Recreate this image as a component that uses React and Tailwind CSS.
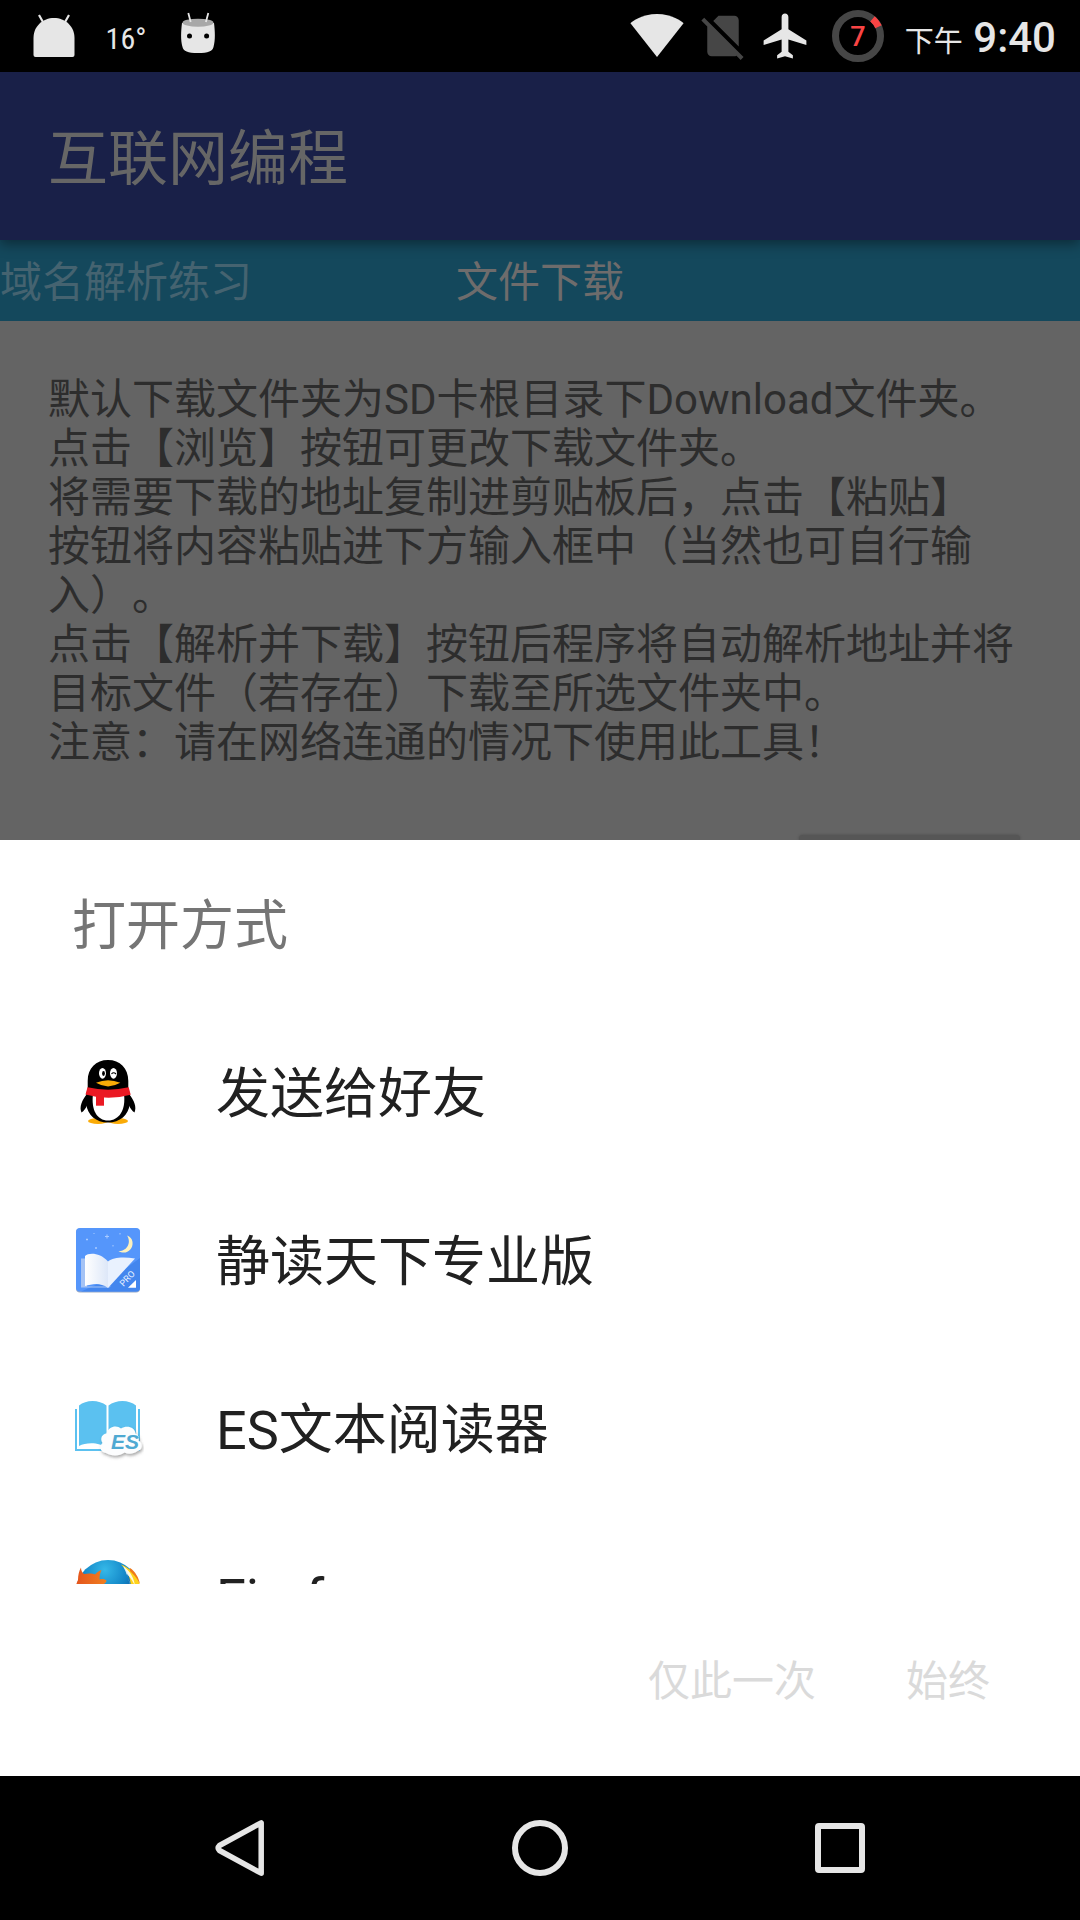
import React from "react";

function DroidIcon() {
  return (
    <svg viewBox="0 0 72 72" className="size-[72px]" aria-hidden="true">
      <path d="M21 15l4.500 8M51 15l-4.500 8" stroke="#e6e6e6" strokeWidth="2.200" />
      <path d="M15.500 38C15.500 26 25 18 36 18s20.500 8 20.500 20v17q0 2-2 2h-37q-2 0-2-2z" fill="#e6e6e6" />
    </svg>
  );
}

function CyanIcon() {
  return (
    <svg viewBox="0 0 72 72" className="size-[72px]" aria-hidden="true">
      <path d="M20 23C19 31 18.500 40 20.500 47c1 4 5 6 15.500 6s14.500-2 15.500-6c2-7 1.500-16 .5-24z" fill="#e6e6e6" />
      <ellipse cx="36" cy="22.700" rx="15.500" ry="4" fill="#a8a8a8" />
      <path d="M26.300 13l2.400 9M46.300 13l-2.400 9" stroke="#e6e6e6" strokeWidth="1.800" />
      <circle cx="27.500" cy="36" r="2.500" />
      <circle cx="44.600" cy="36" r="2.500" />
    </svg>
  );
}

function WifiIcon() {
  return (
    <svg viewBox="0 0 24 24" className="size-[54px]" fill="#e6e6e6" aria-hidden="true">
      <path d="M12 21.300L23.800 6.300C23 5.500 18.700 2.200 12 2.200S1 5.500.2 6.300z" />
    </svg>
  );
}

function NoSimIcon() {
  return (
    <svg viewBox="0 0 24 24" className="ml-3 size-[54px]" fill="#464646" aria-hidden="true">
      <path d="M18.990 5c0-1.100-.89-2-1.990-2h-7L7.660 5.340 19 16.680 18.990 5zM3.650 3.880L2.380 5.150 5 7.770V19c0 1.100.9 2 2 2h10.010c.35 0 .67-.1.96-.26l1.880 1.880 1.270-1.270L3.650 3.880z" />
    </svg>
  );
}

function PlaneIcon() {
  return (
    <svg viewBox="0 0 24 24" className="ml-2 size-[54px]" fill="#e6e6e6" aria-hidden="true">
      <path d="M21.500 16v-2L13.500 9V3.500c0-.83-.67-1.500-1.500-1.500s-1.500.67-1.500 1.500V9l-8 5v2l8-2.500V19l-2 1.500V22l3.500-1 3.500 1v-1.500L13.500 19v-5.500l8 2.500z" />
    </svg>
  );
}

function BatteryRing() {
  return (
    <div className="ml-5 grid size-[52px] place-items-center">
      <svg viewBox="0 0 52 52" className="col-start-1 row-start-1 size-[52px]" fill="none" strokeWidth="7" aria-hidden="true">
        <circle cx="26" cy="26" r="22.500" stroke="#464646" />
        <path d="M40.500 8.800A22.500 22.500 0 0 1 46.500 16.800" stroke="#f94444" />
      </svg>
      <span className="col-start-1 row-start-1 pt-0.5 text-[27px] leading-none font-medium text-[#f94444]">7</span>
    </div>
  );
}

function StatusBar() {
  return (
    <header className="flex h-[72px] shrink-0 items-center bg-black pr-6 pl-[18px] text-[#e6e6e6]">
      <DroidIcon />
      <span className="w-[72px] pt-1 text-center font-['Liberation_Sans_Narrow','Roboto_Condensed',Roboto,sans-serif] text-[30px]">16°</span>
      <CyanIcon />
      <div className="ml-auto flex items-center">
        <WifiIcon />
        <NoSimIcon />
        <PlaneIcon />
        <BatteryRing />
        <div className="ml-[21px] pt-2 text-[42px] leading-[48px] font-medium whitespace-nowrap">
          <span className="text-[29px] font-normal">下午</span> 9:40
        </div>
      </div>
    </header>
  );
}

function PenguinIcon() {
  return (
    <svg viewBox="0 0 72 72" className="size-[72px]" aria-hidden="true">
      <ellipse cx="26" cy="65" rx="10" ry="3" fill="#faab07" />
      <ellipse cx="46" cy="65" rx="10" ry="3" fill="#faab07" />
      <path d="M15 38c-5 6-8 13-5.500 18.500 2.500-1.500 4-4 5.500-7zM57 38c5 6 8 13 5.500 18.500-2.500-1.500-4-4-5.500-7z" />
      <path d="M36 4C24 4 15.700 12 15.700 25v8c-2 5-2 10-1.500 15C15.500 59 24 66.500 36 66.500S56.500 59 57.800 48c.5-5 .5-10-1.500-15v-8C56.300 12 48 4 36 4z" />
      <path d="M21 38c-2 16 4 26.500 15 26.500S54 54 52 38z" fill="#fff" />
      <ellipse cx="30.500" cy="17.300" rx="3.500" ry="5.400" fill="#fff" />
      <ellipse cx="41.500" cy="17.300" rx="3.500" ry="5.400" fill="#fff" />
      <ellipse cx="31.500" cy="17.500" rx="1.400" ry="2.400" />
      <path d="M39.500 18q2-2.500 4.500 0" fill="none" stroke="#000" strokeWidth="1.200" />
      <path d="M24 26.800Q36 21.500 48.300 26.800 36 34 24 26.800z" fill="#faab07" />
      <path d="M15.500 31.300Q36 36 56.700 31.300l2 7.500Q36 45 13.500 38.500z" fill="#eb1923" />
      <path d="M24 38h8v11.700h-8z" fill="#eb1923" />
    </svg>
  );
}

function MoonReaderIcon() {
  return (
    <svg viewBox="0 0 72 72" className="size-[72px]" aria-hidden="true">
      <defs>
        <linearGradient id="page" x1="0" x2="1">
          <stop offset="0" stopColor="#fff" />
          <stop offset="1" stopColor="#dde7f8" />
        </linearGradient>
      </defs>
      <rect x="4" y="4.500" width="64" height="64" rx="4" fill="#9aa9c4" />
      <rect x="4" y="4" width="64" height="63.500" rx="4" fill="#5596fb" />
      <path d="M68 34v29.500a4 4 0 0 1-4 4H9l34-15z" fill="#4386ee" />
      <path d="M9 34.500h6v28h24l-2 1H9z" fill="#a5c3f5" />
      <path d="M13 32c4-3.500 15-3.500 23 5.500V64c-8-6-16-4-23-2z" fill="url(#page)" />
      <path d="M36 37.500c5-4.500 16-5 27-3L36 64z" fill="#e9f1fe" />
      <path d="M55 11.500c5 7.500-.5 16-8.500 15.500 7 4.500 15-1 14-9-.3-3-2.500-5.500-5.500-6.500z" fill="#fdf1bd" />
      <path d="M35 10.500v4M33 12.500h4M15 14.500v2M14 15.500h2M24 23v2M23 24h2M48 9v1.500M41 21v1.500M22 9v1" stroke="#a9cbff" strokeWidth="1" />
      <path d="M64 56v7.700h-8z" fill="#fff" />
      <text x="0" y="0" transform="translate(51.500 63) rotate(-47)" fontSize="9" fill="#e6f0ff" fontFamily="Roboto, sans-serif">PRO</text>
    </svg>
  );
}

function EsReaderIcon() {
  return (
    <svg viewBox="0 0 72 72" className="size-[72px]" aria-hidden="true">
      <defs>
        <filter id="cloud" x="-20%" y="-20%" width="150%" height="160%">
          <feDropShadow dx="1" dy="2" stdDeviation="1.500" floodColor="#555" floodOpacity=".5" />
        </filter>
      </defs>
      <path d="M3 17h2v40h28.500l2 1.500 2-1.500H66V17h2v42H3z" fill="#5bc1f0" />
      <path d="M7 13.500C14 7.500 27 7.500 34.500 13.500V56C28 50 14 50 7 54zM36.500 13.500C44 7.500 57 7.500 64 13.500V52H36.500z" fill="#5bc1f0" />
      <path d="M34 61c-6-1-7-7-3.500-10-3-5 0-9 4-9.500 2-7 10-9 14.500-5 6-4 14-1 14.500 5 3.500 2 4 5 3 7 5 3 4 10-1 10.500-4 3-9 3.500-13 1.500-5 4-14 3.500-18.500.5z" fill="#fcfdfe" filter="url(#cloud)" />
      <text x="39" y="57" fontSize="21" fontStyle="italic" fontWeight="700" fill="#4fa9d2" fontFamily="Liberation Sans Narrow, Liberation Sans, sans-serif">ES</text>
    </svg>
  );
}

function FirefoxIcon() {
  return (
    <svg viewBox="0 0 72 72" className="size-[72px]" aria-hidden="true">
      <defs>
        <radialGradient id="globe" cx=".45" cy=".15" r=".7">
          <stop offset="0" stopColor="#35b8e8" />
          <stop offset=".5" stopColor="#1285c6" />
          <stop offset="1" stopColor="#0c3c85" />
        </radialGradient>
        <linearGradient id="fox" x1="0" x2="1">
          <stop offset="0" stopColor="#e4531c" />
          <stop offset="1" stopColor="#f8a022" />
        </linearGradient>
      </defs>
      <circle cx="36" cy="32" r="32" fill="url(#globe)" />
      <path d="M49 4.500C58 8 68 17 68 28c2 22-14 38-32 38 14-5 24-18 23-34C59 19 57 12 49 4.500z" fill="#ffd31a" />
      <path d="M51 6c6 4 11 11 12 20-2-5-6-10-9-13 2 4 4 9 4 13-1-8-4-14-7-20z" fill="#fff" fillOpacity=".85" />
      <path d="M58 8c5 3 9 10 10 16-3-6-6-9-10-13z" fill="#ee7a1c" />
      <path d="M3 36c0-8 1-12 3-16 0-5 1-9 3-12.500 0 3 1 5 3 6.500 5-1 9-.5 11 .5 2-2 4-4 6.500-4.500-1.500 3-2 6-2 9.500 3-1 6 0 7 1 0 3-4 4-7 6-2 14 14 22 31 15C44 76 3 68 3 36z" fill="url(#fox)" />
    </svg>
  );
}

const description = [
  "默认下载文件夹为SD卡根目录下Download文件夹。",
  "点击【浏览】按钮可更改下载文件夹。",
  "将需要下载的地址复制进剪贴板后，点击【粘贴】",
  "按钮将内容粘贴进下方输入框中（当然也可自行输入）。",
  "点击【解析并下载】按钮后程序将自动解析地址并将目标文件（若存在）下载至所选文件夹中。",
  "注意：请在网络连通的情况下使用此工具！",
];

const targets = [
  { name: "发送给好友", Icon: PenguinIcon },
  { name: "静读天下专业版", Icon: MoonReaderIcon },
  { name: "ES文本阅读器", Icon: EsReaderIcon },
  { name: "Firefox", Icon: FirefoxIcon },
];

function Page() {
  return (
    <main className="flex flex-1 flex-col overflow-hidden bg-[#646464]">
      <div className="z-10 flex h-[168px] shrink-0 items-center bg-[#192048] px-12 pt-2 shadow-[0_4px_12px_rgba(0,0,0,0.4)]">
        <h1 className="text-[60px] leading-[72px] text-[#666]">互联网编程</h1>
      </div>
      <nav className="grid h-[81px] shrink-0 grid-cols-[1fr_auto_1fr] items-center bg-[#14485c] pt-1 text-[42px] leading-[49px]">
        <button type="button" className="justify-self-start text-[#456370]">域名解析练习</button>
        <button type="button" aria-current="page" className="text-[#6e6c6c]">文件下载</button>
      </nav>
      <section className="px-12 pt-[54px] text-[42px] leading-[49px] text-[#2d2d2d]">
        {description.map((line) => (
          <p key={line}>{line}</p>
        ))}
        <div className="mt-[68px] flex justify-end pr-3">
          <button type="button" aria-label="浏览" className="h-[5px] w-[221px] rounded-t bg-[#565656] shadow-[0_0_3px_rgba(0,0,0,0.25)]" />
        </div>
      </section>
    </main>
  );
}

function OpenWithSheet() {
  return (
    <section role="dialog" aria-labelledby="sheet-title" className="shrink-0 bg-white">
      <div className="flex h-[168px] items-center px-[72px] pt-1.5">
        <h2 id="sheet-title" className="text-[54px] leading-[64px] text-[#757575]">打开方式</h2>
      </div>
      <ul className="h-[576px] overflow-y-auto [scrollbar-width:none]">
        {targets.map(({ name, Icon }) => (
          <li key={name}>
            <button type="button" className="flex h-[168px] w-full items-center gap-[72px] px-[72px] text-left text-[54px] leading-[64px] text-[#212121]">
              <Icon />
              <span className="pt-1.5">{name}</span>
            </button>
          </li>
        ))}
      </ul>
      <div className="flex h-48 items-center justify-end gap-[90px] pt-0.5 pr-[90px] text-[42px] leading-[49px] text-[#dadada]">
        <button type="button" disabled>仅此一次</button>
        <button type="button" disabled>始终</button>
      </div>
    </section>
  );
}

function NavigationBar() {
  return (
    <footer className="grid h-36 shrink-0 grid-cols-3 bg-black px-[90px]">
      <button type="button" aria-label="返回" className="grid place-items-center">
        <svg viewBox="0 0 60 60" className="size-[60px]" fill="none" stroke="#e6e6e6" strokeWidth="5.500" strokeLinejoin="round" aria-hidden="true">
          <path d="M51.200 4.800v50.400L9.500 32.500Q7 30 9.500 27.500z" />
        </svg>
      </button>
      <button type="button" aria-label="主屏幕" className="grid place-items-center">
        <svg viewBox="0 0 60 60" className="size-[60px]" fill="none" stroke="#e6e6e6" strokeWidth="6" aria-hidden="true">
          <circle cx="30" cy="30" r="25" />
        </svg>
      </button>
      <button type="button" aria-label="最近任务" className="grid place-items-center">
        <svg viewBox="0 0 60 60" className="size-[60px]" fill="none" stroke="#e6e6e6" strokeWidth="6" aria-hidden="true">
          <rect x="8" y="8" width="44" height="44" rx="1" strokeLinejoin="round" />
        </svg>
      </button>
    </footer>
  );
}

export default function App() {
  return (
    <div lang="zh-CN" className="flex h-screen flex-col overflow-hidden bg-black font-[Roboto,'Noto_Sans_CJK_SC',sans-serif] [text-spacing-trim:space-all]">
      <StatusBar />
      <Page />
      <OpenWithSheet />
      <NavigationBar />
    </div>
  );
}
